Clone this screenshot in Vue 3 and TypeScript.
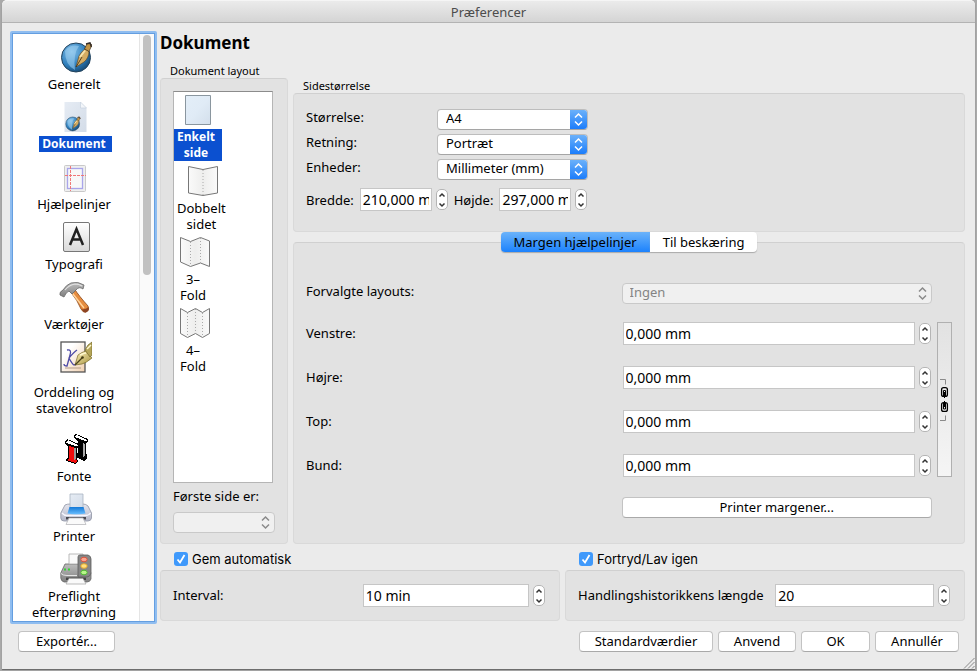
<script setup lang="ts">
import { ref } from 'vue'

interface Section {
  id: string
  label: string
  tall?: boolean
}

interface PageLayout {
  id: string
  label: string
  outline: string
  folds: string
}

interface Margin {
  id: string
  label: string
  value: string
}

const sections: Section[] = [
  { id: 'general', label: 'Generelt' },
  { id: 'document', label: 'Dokument' },
  { id: 'guides', label: 'Hjælpelinjer' },
  { id: 'typography', label: 'Typografi' },
  { id: 'tools', label: 'Værktøjer' },
  { id: 'hyphenator', label: 'Orddeling og stavekontrol', tall: true },
  { id: 'fonts', label: 'Fonte' },
  { id: 'printer', label: 'Printer' },
  { id: 'preflight', label: 'Preflight efterprøvning' },
]

const layouts: PageLayout[] = [
  { id: 'single', label: 'Enkelt\nside', outline: 'M3.5 1.5h25v29h-25z', folds: '' },
  { id: 'double', label: 'Dobbelt\nsidet', outline: 'M1.5 1.5L16 4.5L30.5 1.5V28L16 30.5L1.5 28Z', folds: 'M16 5V30' },
  { id: 'fold3', label: '3–\nFold', outline: 'M1.5 1.5L11.5 5.5L21.5 1.5L30.5 5V30.5L21.5 27L11.5 30.5L1.5 26Z', folds: 'M11.5 6V30M21.5 2V27' },
  { id: 'fold4', label: '4–\nFold', outline: 'M1.5 1.5L8.5 5.5L16.5 1.5L23.5 5.5L30.5 1.5V26.5L23.5 30.5L16.5 26.5L8.5 30.5L1.5 26.5Z', folds: 'M8.5 6V30M16.5 2V26M23.5 6V30' },
]

const currentSection = ref('document')
const currentLayout = ref('single')
const activeTab = ref<'margins' | 'bleeds'>('margins')

const size = ref('A4')
const orientation = ref('Portræt')
const unit = ref('Millimeter (mm)')
const pageWidth = ref('210,000 mm')
const pageHeight = ref('297,000 mm')

const margins = ref<Margin[]>([
  { id: 'left', label: 'Venstre:', value: '0,000 mm' },
  { id: 'right', label: 'Højre:', value: '0,000 mm' },
  { id: 'top', label: 'Top:', value: '0,000 mm' },
  { id: 'bottom', label: 'Bund:', value: '0,000 mm' },
])

const autosave = ref(true)
const undo = ref(true)
const interval = ref('10 min')
const history = ref('20')
</script>

<template>
  <div class="window">
    <header class="titlebar">Præferencer</header>

    <div class="content">
      <nav class="sidebar">
        <div class="sections">
          <button
            v-for="s in sections"
            :key="s.id"
            type="button"
            class="section"
            :class="{ selected: s.id === currentSection, tall: s.tall }"
            @click="currentSection = s.id"
          >
            <svg v-if="s.id === 'general'" width="32" height="32" viewBox="0 0 32 32">
              <use href="#globe-pen" />
            </svg>
            <svg v-else-if="s.id === 'document'" width="32" height="32" viewBox="0 0 32 32">
              <path d="M5.500 1h16l6 6v24h-22z" fill="url(#sheet)" />
              <path d="M21.500 1v6h6z" fill="#f3f6fa" stroke="#c3cedb" stroke-width=".6" />
              <use href="#globe-pen" transform="translate(6 15) scale(.48)" />
            </svg>
            <svg v-else-if="s.id === 'guides'" width="32" height="32" viewBox="0 0 32 32">
              <rect x="5.500" y="4.500" width="21" height="26" rx="1" fill="#efefef" stroke="#c9c9c9" />
              <rect x="8.500" y="7.500" width="15" height="20" fill="#f8f8f8" stroke="#a9a5ea" stroke-width="1.300" />
              <path d="M6 14.500h21M11.500 5v25" fill="none" stroke="#f07878" stroke-dasharray="3 1" />
            </svg>
            <svg v-else-if="s.id === 'typography'" width="32" height="32" viewBox="0 0 32 32">
              <rect x="3.500" y="1.500" width="26" height="29" rx="1.500" fill="url(#key)" stroke="#777" />
              <path d="M10 24L16.500 8L23 24M12.500 18.500h8" fill="none" stroke="#222" stroke-width="2.500" />
            </svg>
            <svg v-else-if="s.id === 'tools'" width="32" height="32" viewBox="0 0 32 32">
              <path d="M11 10L15.500 8Q20 15 29 25Q31 29 27 31Q24 32 22 28Q19 20 11 10Z" fill="url(#wood)" stroke="#8a4413" stroke-width=".8" />
              <path d="M23 28Q26 29 29.500 26Q31 30 27 31.500Q24 32 23 28Z" fill="#8e4423" />
              <path d="M12.500 11Q17 17 25 27" stroke="#ffd39b" stroke-width="1.500" fill="none" />
              <path d="M1 14Q0 11 4 9Q7 4 12 2Q19 0 25 4L24 8Q20 5 17 9L13 13L10 10Q7 11 5 16Z" fill="url(#steel)" stroke="#666" stroke-width=".8" />
              <path d="M6 9Q10 4 16 3Q20 3 23 5" stroke="#e2e2e2" stroke-width="1.200" fill="none" />
            </svg>
            <svg v-else-if="s.id === 'hyphenator'" width="32" height="32" viewBox="0 0 32 32">
              <rect x="1" y="1" width="24" height="30" fill="url(#paper)" stroke="#555" stroke-width="1.300" />
              <path d="M5 27h16" stroke="#b49b87" />
              <path d="M7 9Q12 8 10 14L7 25Q4 25 4 23M17 9Q14 11 9 17Q12 23 14 24Q16 24 17 22" fill="none" stroke="#4d4aa6" stroke-width="1.300" />
              <path d="M15 24L18 14Q22 11 26 10L32 17Q26 22 22 23Z" fill="url(#gold)" stroke="#776a2a" stroke-width=".7" />
              <path d="M25 9L28 4L32 1V14L30 16Z" fill="#b4a558" stroke="#776a2a" stroke-width=".7" />
              <path d="M15 24L22 17" stroke="#4b421c" stroke-width="1.200" />
              <circle cx="22.500" cy="16.500" r="1.300" fill="#40370f" />
              <path d="M20 14Q24 12 26 12M27 8l4-4" stroke="#fff8cf" stroke-width="1.500" fill="none" />
            </svg>
            <svg v-else-if="s.id === 'fonts'" width="32" height="32" viewBox="0 0 32 32" shape-rendering="crispEdges">
              <path d="M15 5V2L17 1L29 6V9L27 10V21L28 22V25L25 28L17 24V21L19 20V8Z" fill="#000" />
              <path d="M16 3L18 2L28 7V8L26 8L16 4Z" fill="#fff" />
              <path d="M24 10L26 11V22L24 25Z" fill="#aaa" />
              <path d="M6 11V8L8 6L20 11V14L18 15V26L19 28L16 31L7 28V26L9 25V13Z" fill="#000" />
              <path d="M7 9L9 7L19 12V13L17 13L7 10Z" fill="#fff" />
              <path d="M10 13L16 15V26L18 28L16 30L8 27L10 26Z" fill="#f20d0d" />
              <path d="M15 15h2v10l-2 2z" fill="#999" />
            </svg>
            <svg v-else-if="s.id === 'printer'" width="32" height="32" viewBox="0 0 32 32">
              <path d="M5 12Q7 11 10 11H23Q26 11 28 13L31.500 20V25Q31 28 28 28H4Q1 28 .8 25V20Z" fill="url(#shell)" stroke="#8f94a5" stroke-width=".8" />
              <path d="M10 1h13v14H10z" fill="url(#sheet)" stroke="#aab4c1" stroke-width=".8" />
              <path d="M9.500 14h14l2 6.500Q16 22.500 7.500 20.500Z" fill="url(#blue)" />
              <path d="M2 20Q4 22.500 7 22.500H25Q29 22.500 30.500 20" fill="none" stroke="#f7f7ff" stroke-width="1.300" />
              <path d="M6 24h20v2.500H6z" fill="#4a4a52" />
              <path d="M9 25h14l3 6.500H6Z" fill="#fafafa" stroke="#b9b9bd" stroke-width=".8" />
            </svg>
            <svg v-else width="32" height="32" viewBox="0 0 32 32">
              <path d="M5 11H25L31 20V26Q30 29 27 29H4Q1 28 .8 25V20Z" fill="url(#steel)" stroke="#666" stroke-width=".8" />
              <path d="M9 1h14v10H9z" fill="#fafafa" stroke="#aaa" stroke-width=".8" />
              <path d="M4 16.500h2M8 16.500h2" stroke="#36d036" stroke-width="2" />
              <path d="M1 20.500Q3 22.500 7 22.500H17" fill="none" stroke="#e5e5e5" />
              <path d="M6 24.500h20v2.500H6z" fill="#444" />
              <path d="M9 25.500h14l3 5.500H6Z" fill="#fafafa" stroke="#aaa" stroke-width=".8" />
              <path d="M18 4Q18 2 20 2H28Q31 3 31 6V20Q30 24 27 24H18Z" fill="#868686" stroke="#5c5c5c" stroke-width=".8" />
              <ellipse cx="24" cy="6.500" rx="3.200" ry="2.300" fill="#fba48f" stroke="#d8543c" />
              <ellipse cx="24" cy="13" rx="3.200" ry="2.300" fill="#ffe07e" stroke="#e0a42c" />
              <ellipse cx="24" cy="19.500" rx="3.200" ry="2.300" fill="#b9f58b" stroke="#4fba34" />
            </svg>
            <span class="section-label">{{ s.label }}</span>
          </button>
        </div>
        <div class="scroll-track"><div class="scroll-thumb"></div></div>
      </nav>

      <main class="main">
        <h1>Dokument</h1>

        <div class="upper">
          <section class="layout-group">
            <h2>Dokument layout</h2>
            <div class="panel layout-panel">
              <div class="layout-list">
                <button
                  v-for="l in layouts"
                  :key="l.id"
                  type="button"
                  class="layout"
                  :class="{ selected: l.id === currentLayout }"
                  @click="currentLayout = l.id"
                >
                  <svg width="32" height="32" viewBox="0 0 32 32">
                    <path :d="l.outline" :fill="l.id === 'single' ? 'url(#page-blue)' : 'url(#page-fold)'" :stroke="l.id === 'single' ? '#8a969f' : '#777'" />
                    <path :d="l.folds" stroke="#aaa" stroke-dasharray="1 2" fill="none" />
                  </svg>
                  <span class="layout-label">{{ l.label }}</span>
                </button>
              </div>
              <label class="first-label" for="first-page">Første side er:</label>
              <span class="select disabled">
                <select id="first-page" disabled></select>
                <svg width="17" height="19" viewBox="0 0 17 19"><path d="M5 7.500L8.500 4L12 7.500M5 11.500L8.500 15L12 11.500" /></svg>
              </span>
            </div>
          </section>

          <div class="right">
            <section>
              <h2>Sidestørrelse</h2>
              <div class="panel size-panel">
                <div class="size-row">
                  <label for="size">Størrelse:</label>
                  <span class="select">
                    <select id="size" v-model="size"><option>A4</option><option>A5</option></select>
                    <svg width="17" height="19" viewBox="0 0 17 19"><path d="M5 7.500L8.500 4L12 7.500M5 11.500L8.500 15L12 11.500" /></svg>
                  </span>
                </div>
                <div class="size-row">
                  <label for="orientation">Retning:</label>
                  <span class="select">
                    <select id="orientation" v-model="orientation"><option>Portræt</option><option>Landskab</option></select>
                    <svg width="17" height="19" viewBox="0 0 17 19"><path d="M5 7.500L8.500 4L12 7.500M5 11.500L8.500 15L12 11.500" /></svg>
                  </span>
                </div>
                <div class="size-row">
                  <label for="unit">Enheder:</label>
                  <span class="select">
                    <select id="unit" v-model="unit"><option>Millimeter (mm)</option><option>Punkter (pt)</option></select>
                    <svg width="17" height="19" viewBox="0 0 17 19"><path d="M5 7.500L8.500 4L12 7.500M5 11.500L8.500 15L12 11.500" /></svg>
                  </span>
                </div>
                <div class="dimension-row">
                  <label for="page-width">Bredde:</label>
                  <span class="spin">
                    <input id="page-width" v-model="pageWidth" type="text" />
                    <span class="stepper">
                      <button type="button" aria-label="Op"><svg width="10" height="9" viewBox="0 0 10 9"><path d="M2.500 6.500L5 4L7.500 6.500" /></svg></button>
                      <button type="button" aria-label="Ned"><svg width="10" height="9" viewBox="0 0 10 9"><path d="M2.500 3.500L5 6L7.500 3.500" /></svg></button>
                    </span>
                  </span>
                  <label for="page-height">Højde:</label>
                  <span class="spin">
                    <input id="page-height" v-model="pageHeight" type="text" />
                    <span class="stepper">
                      <button type="button" aria-label="Op"><svg width="10" height="9" viewBox="0 0 10 9"><path d="M2.500 6.500L5 4L7.500 6.500" /></svg></button>
                      <button type="button" aria-label="Ned"><svg width="10" height="9" viewBox="0 0 10 9"><path d="M2.500 3.500L5 6L7.500 3.500" /></svg></button>
                    </span>
                  </span>
                </div>
              </div>
            </section>

            <section class="tabbed">
              <div class="tabs" role="tablist">
                <button type="button" role="tab" :class="{ active: activeTab === 'margins' }" @click="activeTab = 'margins'">Margen hjælpelinjer</button>
                <button type="button" role="tab" :class="{ active: activeTab === 'bleeds' }" @click="activeTab = 'bleeds'">Til beskæring</button>
              </div>
              <div class="panel tab-panel">
                <div class="columns preset">
                  <label for="preset">Forvalgte layouts:</label>
                  <span class="select disabled">
                    <select id="preset" disabled><option>Ingen</option></select>
                    <svg width="17" height="19" viewBox="0 0 17 19"><path d="M5 7.500L8.500 4L12 7.500M5 11.500L8.500 15L12 11.500" /></svg>
                  </span>
                </div>
                <div class="columns margins">
                  <template v-for="m in margins" :key="m.id">
                    <label :for="m.id">{{ m.label }}</label>
                    <span class="spin">
                      <input :id="m.id" v-model="m.value" type="text" />
                      <span class="stepper">
                        <button type="button" aria-label="Op"><svg width="10" height="9" viewBox="0 0 10 9"><path d="M2.500 6.500L5 4L7.500 6.500" /></svg></button>
                        <button type="button" aria-label="Ned"><svg width="10" height="9" viewBox="0 0 10 9"><path d="M2.500 3.500L5 6L7.500 3.500" /></svg></button>
                      </span>
                    </span>
                  </template>
                  <button type="button" class="chain" aria-label="Lås margener sammen">
                    <svg width="13" height="44" viewBox="0 0 13 44">
                      <path d="M2 1.500h5.500v5M2 42.500h5.500v-5" fill="none" stroke="#8a8a8a" />
                      <rect x="3.600" y="9.600" width="5.800" height="8.800" rx="2" fill="#eee" stroke="#000" stroke-width="1.300" />
                      <path d="M5.500 18.500v-6h2v6M6.500 14v6" fill="none" stroke="#000" />
                      <rect x="3.600" y="24.600" width="5.800" height="8.800" rx="2" fill="#eee" stroke="#000" stroke-width="1.300" />
                      <path d="M5.500 25v6h2v-6M6.500 23v6" fill="none" stroke="#000" />
                    </svg>
                  </button>
                </div>
                <div class="columns">
                  <button type="button" class="push printer-margins">Printer margener...</button>
                </div>
              </div>
            </section>
          </div>
        </div>

        <div class="lower">
          <section>
            <label class="check">
              <input v-model="autosave" type="checkbox" />
              <svg width="14" height="14" viewBox="0 0 14 14"><path d="M3.500 7.500L6 10.500L10.500 3" /></svg>
              Gem automatisk
            </label>
            <div class="panel option-panel autosave-panel">
              <label for="interval">Interval:</label>
              <span class="spin">
                <input id="interval" v-model="interval" type="text" />
                <span class="stepper">
                  <button type="button" aria-label="Op"><svg width="10" height="9" viewBox="0 0 10 9"><path d="M2.500 6.500L5 4L7.500 6.500" /></svg></button>
                  <button type="button" aria-label="Ned"><svg width="10" height="9" viewBox="0 0 10 9"><path d="M2.500 3.500L5 6L7.500 3.500" /></svg></button>
                </span>
              </span>
            </div>
          </section>
          <section>
            <label class="check">
              <input v-model="undo" type="checkbox" />
              <svg width="14" height="14" viewBox="0 0 14 14"><path d="M3.500 7.500L6 10.500L10.500 3" /></svg>
              Fortryd/Lav igen
            </label>
            <div class="panel option-panel undo-panel">
              <label for="history">Handlingshistorikkens længde</label>
              <span class="spin">
                <input id="history" v-model="history" type="text" />
                <span class="stepper">
                  <button type="button" aria-label="Op"><svg width="10" height="9" viewBox="0 0 10 9"><path d="M2.500 6.500L5 4L7.500 6.500" /></svg></button>
                  <button type="button" aria-label="Ned"><svg width="10" height="9" viewBox="0 0 10 9"><path d="M2.500 3.500L5 6L7.500 3.500" /></svg></button>
                </span>
              </span>
            </div>
          </section>
        </div>
      </main>
    </div>

    <footer class="footer">
      <button type="button" class="push export">Exportér...</button>
      <button type="button" class="push defaults">Standardværdier</button>
      <button type="button" class="push apply">Anvend</button>
      <button type="button" class="push ok">OK</button>
      <button type="button" class="push cancel">Annullér</button>
    </footer>

    <svg class="grip" width="12" height="12" viewBox="0 0 12 12"><path d="M1 11.500L11.500 1M5 11.500L11.500 5M9 11.500L11.500 9" fill="none" stroke="#888" /></svg>

    <svg class="defs" width="0" height="0" aria-hidden="true">
      <defs>
        <radialGradient id="globe" cx=".35" cy=".3" r=".8">
          <stop offset="0" stop-color="#82bfe9" /><stop offset=".6" stop-color="#2f7fbc" /><stop offset="1" stop-color="#123f66" />
        </radialGradient>
        <linearGradient id="sheet" x1="0" y1="0" x2="1" y2="1"><stop offset="0" stop-color="#e6ecf4" /><stop offset="1" stop-color="#d3dce8" /></linearGradient>
        <linearGradient id="key" x1="0" y1="0" x2="0" y2="1"><stop offset="0" stop-color="#fff" /><stop offset="1" stop-color="#d9d9d9" /></linearGradient>
        <linearGradient id="wood" x1="0" y1="1" x2="1" y2="0"><stop offset="0" stop-color="#d76f1d" /><stop offset="1" stop-color="#f2a55c" /></linearGradient>
        <linearGradient id="steel" x1="0" y1="0" x2="0" y2="1"><stop offset="0" stop-color="#bdbdbd" /><stop offset="1" stop-color="#808080" /></linearGradient>
        <linearGradient id="paper" x1="0" y1="0" x2="1" y2="1"><stop offset=".3" stop-color="#fff" /><stop offset="1" stop-color="#f0cfae" /></linearGradient>
        <linearGradient id="gold" x1="0" y1="0" x2="1" y2="1"><stop offset="0" stop-color="#fff3bd" /><stop offset="1" stop-color="#a5913d" /></linearGradient>
        <linearGradient id="shell" x1="0" y1="0" x2="0" y2="1"><stop offset="0" stop-color="#e4e5ee" /><stop offset="1" stop-color="#b4b7c8" /></linearGradient>
        <linearGradient id="blue" x1="0" y1="0" x2="0" y2="1"><stop offset="0" stop-color="#1378d6" /><stop offset="1" stop-color="#6cc0ff" /></linearGradient>
        <linearGradient id="page-blue" x1="0" y1="0" x2="1" y2="1"><stop offset="0" stop-color="#e3eef8" /><stop offset=".5" stop-color="#e0ebf6" /><stop offset="1" stop-color="#d3dfeb" /></linearGradient>
        <linearGradient id="page-fold"><stop offset="0" stop-color="#fafafa" /><stop offset=".5" stop-color="#eeeeed" /><stop offset="1" stop-color="#fafafa" /></linearGradient>
        <g id="globe-pen">
          <circle cx="16" cy="16.500" r="14.500" fill="url(#globe)" stroke="#24435c" />
          <path d="M5 10Q10 3 19 5Q13 13 15 29Q5 24 5 10Z" fill="#a4d4f3" opacity=".55" />
          <path d="M16 26L19 15Q21 11 25 8L29 10Q29 17 24 21Z" fill="#d5ac62" stroke="#59401b" stroke-width=".6" />
          <path d="M24.500 8L27 2.500Q30 1 32 4L29 10.500Z" fill="#c29446" stroke="#2d2114" stroke-width=".6" />
          <path d="M26 3L30 2L31.500 6" fill="none" stroke="#38302b" stroke-width="1.500" />
          <path d="M16 26L22 16" stroke="#3b2b12" stroke-width=".8" />
          <path d="M20 16L25 9.500" stroke="#f7e3ad" stroke-width="2" />
        </g>
      </defs>
    </svg>
  </div>
</template>

<style>
body {
  margin: 0;
  background: #a9a9a9;
}
</style>

<style scoped>
* {
  box-sizing: border-box;
}

.window {
  position: relative;
  display: flex;
  flex-direction: column;
  min-height: calc(100vh - 2px);
  margin: 0 2px 2px;
  background: #ebebeb;
  border-radius: 5px 5px 0 0;
  box-shadow: 0 1px 1px #666;
  color: #000;
  font: 13px/16px 'Noto Sans', 'Open Sans', sans-serif;
}

button,
input,
select {
  font: inherit;
  color: inherit;
}

h1,
h2 {
  margin: 0;
}

.titlebar {
  height: 23px;
  line-height: 23px;
  text-align: center;
  color: #4c4c4c;
  border-top: 1px solid #f5f5f5;
  border-bottom: 1px solid #b3b3b3;
  border-radius: 5px 5px 0 0;
  background: linear-gradient(#ebebeb, #d4d4d4);
}

.content {
  flex: 1;
  display: flex;
  gap: 3px;
  padding: 8px 10px 0 8px;
}

.sidebar {
  display: flex;
  width: 147px;
  flex: none;
  border: 2px solid #8fbdf0;
  outline: 1px solid #649ee0;
  outline-offset: -3px;
  border-radius: 2px;
  background: #fff;
}

.sections {
  flex: 1;
  display: flex;
  flex-direction: column;
  align-items: center;
  gap: 9px;
  padding: 8px 0 1px;
}

.section {
  display: flex;
  flex-direction: column;
  align-items: center;
  gap: 3px;
  padding: 0;
  border: 0;
  background: none;
}

.section svg {
  display: block;
}

.section-label {
  max-width: 96px;
  padding: 0 6px 0 3px;
}

.section.tall .section-label {
  padding: 8px 6px 8px 3px;
}

.section.selected .section-label {
  background: #0b50d0;
  color: #fff;
  font-family: 'Open Sans', 'Noto Sans', sans-serif;
  font-size: 12px;
  font-weight: 700;
}

.scroll-track {
  width: 16px;
  padding: 2px 3px;
  border-left: 1px solid #e5e5e5;
  background: #fafafa;
}

.scroll-thumb {
  width: 8px;
  height: 41%;
  border-radius: 4px;
  background: #c1c1c1;
}

.main {
  flex: 1;
  min-width: 0;
  display: flex;
  flex-direction: column;
  padding-bottom: 3px;
}

h1 {
  font-size: 17px;
  line-height: 24px;
  font-weight: 700;
}

h2 {
  padding-left: 10px;
  font-size: 11px;
  line-height: 15px;
  font-weight: 400;
}

.panel {
  border: 1px solid #d9d9d9;
  border-top-color: #d0d0d0;
  border-radius: 4px;
  background: #e2e2e2;
}

.upper {
  flex: 1;
  display: grid;
  grid-template-columns: 128px 1fr;
  gap: 5px;
  padding-top: 8px;
}

.layout-group {
  display: flex;
  flex-direction: column;
}

.layout-panel {
  flex: 1;
  display: flex;
  flex-direction: column;
  padding: 12px 12px 10px;
}

.layout-list {
  flex: 1;
  display: flex;
  flex-direction: column;
  align-items: flex-start;
  gap: 4px;
  margin-right: 2px;
  padding-top: 2px;
  border: 1px solid #b5b5b5;
  border-top-color: #8c8c8c;
  background: #fff;
}

.layout {
  display: flex;
  flex-direction: column;
  align-items: center;
  gap: 3px;
  min-width: 42px;
  padding: 0;
  border: 0;
  background: none;
}

.layout svg {
  display: block;
}

.layout-label {
  padding: 0 7px 0 3px;
  white-space: pre-line;
  text-align: center;
}

.layout.selected .layout-label {
  background: #0b50d0;
  color: #fff;
  font-family: 'Open Sans', 'Noto Sans', sans-serif;
  font-size: 12px;
  font-weight: 700;
}

.first-label {
  padding: 5px 0 8px;
}

.select {
  display: grid;
  height: 21px;
  border: 1px solid #bdbdbd;
  border-bottom-color: #a5a5a5;
  border-radius: 4px;
  background: #fff;
  overflow: hidden;
}

.select select {
  grid-area: 1 / 1;
  width: 100%;
  height: 19px;
  padding: 0 20px 2px 8px;
  border: 0;
  appearance: none;
  background: transparent;
  line-height: 17px;
}

.select svg {
  grid-area: 1 / 1;
  justify-self: end;
  background: linear-gradient(#6bb1fa, #1c7dfb);
  pointer-events: none;
}

.select path {
  fill: none;
  stroke: #fff;
  stroke-width: 1.5;
}

.select.disabled {
  background: #f0f0f0;
  border-color: #c9c9c9;
  color: #848484;
}

.select.disabled select {
  padding-left: 7px;
  opacity: 1;
}

.select.disabled svg {
  background: none;
}

.select.disabled path {
  stroke: #8a8a8a;
}

.right {
  display: flex;
  flex-direction: column;
  min-width: 0;
  padding-top: 15px;
}

.size-panel {
  display: flex;
  flex-direction: column;
  gap: 4px;
  padding: 15px 12px 20px;
}

.size-row {
  display: grid;
  grid-template-columns: 131px 151px;
}

.size-row label {
  padding-bottom: 4px;
}

.dimension-row {
  display: flex;
  align-items: center;
  gap: 6px;
  padding-top: 4px;
}

.dimension-row .spin {
  width: 88px;
}

.spin {
  display: flex;
  align-items: center;
  gap: 4px;
}

.spin input {
  flex: 1;
  min-width: 0;
  height: 23px;
  padding: 0 2px;
  border: 1px solid #c6c6c6;
  border-radius: 0;
  background: #fff;
  font-size: 14px;
}

.stepper {
  display: flex;
  flex-direction: column;
  width: 12px;
  height: 21px;
  border: 1px solid #b5b5b5;
  border-radius: 5px;
  background: #fff;
  overflow: hidden;
}

.stepper button {
  flex: 1;
  display: flex;
  padding: 0;
  border: 0;
  background: none;
}

.stepper path {
  fill: none;
  stroke: #333;
  stroke-width: 1.5;
}

.tabbed {
  flex: 1;
  display: flex;
  flex-direction: column;
}

.tabs {
  z-index: 1;
  display: flex;
  justify-content: center;
  height: 20px;
  margin-bottom: -10px;
}

.tabs button {
  padding: 0 13px;
  border: 0;
  border-radius: 0 4px 4px 0;
  background: #fff;
  box-shadow: 0 1px 1px #aaa;
  white-space: nowrap;
}

.tabs button.active {
  border-radius: 4px 0 0 4px;
  background: linear-gradient(#6bb3fa, #1c82fd);
}

.tab-panel {
  flex: 1;
  display: flex;
  flex-direction: column;
  gap: 18px;
  padding: 40px 12px 24px;
}

.columns {
  display: grid;
  grid-template-columns: 1fr 1fr 15px;
  column-gap: 5px;
  align-items: center;
}

.columns label {
  padding-bottom: 2px;
}

.preset label {
  align-self: start;
}

.margins {
  row-gap: 21px;
}

.margins .spin {
  padding: 0 1px;
}

.margins label {
  grid-column: 1;
}

.chain {
  grid-column: 3;
  grid-row: 1 / 5;
  align-self: stretch;
  display: flex;
  align-items: center;
  padding: 0;
  border: 1px solid #b0b0b0;
  background: linear-gradient(#e2e2e2, #f5f5f5);
}

.push {
  height: 21px;
  padding: 0 8px 2px;
  border: 1px solid #c3c3c3;
  border-bottom-color: #a9a9a9;
  border-radius: 4px;
  background: #fff;
  white-space: nowrap;
}

.printer-margins {
  grid-column: 2;
  margin-top: 2px;
}

.lower {
  display: grid;
  grid-template-columns: repeat(2, minmax(0, 1fr));
  gap: 5px;
}

.check {
  display: grid;
  grid-template-columns: 14px 1fr;
  column-gap: 4px;
  align-items: center;
  height: 26px;
  padding: 3px 0 0 14px;
  font-family: Inter, 'Noto Sans', sans-serif;
}

.check input {
  grid-area: 1 / 1;
  width: 14px;
  height: 14px;
  margin: 0;
  appearance: none;
  border-radius: 3px;
  background: #fff;
}

.check input:checked {
  background: #3f99fb;
}

.check svg {
  grid-area: 1 / 1;
  pointer-events: none;
}

.check path {
  fill: none;
  stroke: #fff;
  stroke-width: 1.8;
}

.option-panel {
  display: flex;
  align-items: center;
  justify-content: space-between;
  height: 51px;
  padding: 0 14px 0 12px;
}

.option-panel label {
  padding-bottom: 2px;
  white-space: nowrap;
}

.autosave-panel .spin {
  width: 49%;
}

.undo-panel .spin {
  width: 47%;
}

.footer {
  display: flex;
  gap: 5px;
  padding: 7px 16px 17px;
}

.push.export {
  width: 97px;
  margin-right: auto;
}

.defaults {
  width: 134px;
}

.apply {
  width: 78px;
}

.ok {
  width: 69px;
}

.cancel {
  width: 84px;
}

.grip {
  position: absolute;
  right: 0;
  bottom: 0;
}

.defs {
  position: absolute;
}
</style>
